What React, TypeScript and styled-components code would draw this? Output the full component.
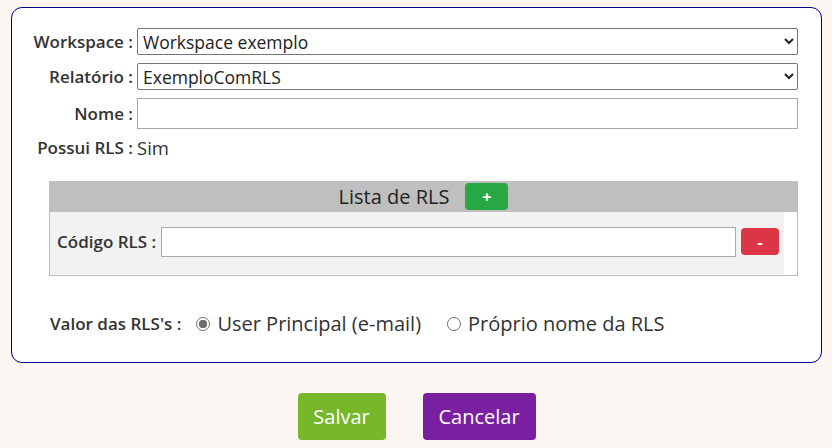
import styled, { createGlobalStyle } from "styled-components";

const GlobalStyle = createGlobalStyle`
  body {
    margin: 0;
    background: #fbf6f1;
    font-family: "Open Sans", "Noto Sans", sans-serif;
    color: #333;
  }
  * { box-sizing: border-box; }
`;

const Page = styled.div`
  padding: 7px 10px 0 11px;
  width: 832px;
  height: 448px;
`;

const Card = styled.div`
  background: #fff;
  border: 1px solid #00008b;
  border-radius: 11px;
  height: 356px;
  padding: 20px 23px 0 0;
`;

const Grid = styled.div`
  display: grid;
  grid-template-columns: 121px 1fr;
  column-gap: 4px;
  row-gap: 8px;
  align-items: center;
`;

const Label = styled.label`
  text-align: right;
  font-weight: 600;
  font-size: 17px;
  line-height: 22px;
  color: #333;
  white-space: nowrap;
`;

const Select = styled.select`
  height: 27px;
  width: 100%;
  font-family: inherit;
  font-size: 17.5px;
  color: #222;
  border: 1px solid #767676;
  border-radius: 2px;
  background: #fff;
  padding: 0 1px;
`;

const TextInput = styled.input<{ $h?: number }>`
  height: ${(p) => p.$h ?? 31}px;
  width: 100%;
  min-width: 0;
  font-family: inherit;
  font-size: 16px;
  border: 1px solid #a9a9a9;
  background: #fff;
  outline: none;
`;

const Value = styled.span`
  font-size: 18.5px;
  line-height: 22px;
  color: #333;
`;

const ListBox = styled.div`
  margin: 22px 0 0 37px;
  border: 1px solid #bdbdbd;
  border-top: none;
  background: #fff;
`;

const ListHeader = styled.div`
  background: #bfbfbf;
  height: 31px;
  display: flex;
  align-items: center;
  justify-content: center;
  gap: 16px;
  font-size: 20px;
  font-weight: 500;
  color: #222;
`;

const SmallButton = styled.button<{ $color: string; $w: number }>`
  flex-shrink: 0;
  background: ${(p) => p.$color};
  color: #fff;
  border: none;
  border-radius: 4px;
  width: ${(p) => p.$w}px;
  height: 27px;
  font-family: inherit;
  font-size: 16px;
  font-weight: 700;
  line-height: 1;
  padding: 0;
`;

const ListBody = styled.div`
  background: #f2f2f2;
  margin-right: 13px;
  height: 63px;
  display: flex;
  align-items: center;
  padding: 0 5px 4px 7px;
  gap: 5px;
`;

const RowLabel = styled.label`
  font-weight: 600;
  font-size: 17px;
  white-space: nowrap;
`;

const RadioRow = styled.div`
  display: flex;
  align-items: center;
  margin: 34px 0 0 38px;
  font-size: 20px;
  color: #333;
`;

const RadioLabel = styled.span`
  font-weight: 600;
  font-size: 17px;
  margin-right: 15px;
`;

const Option = styled.label`
  display: flex;
  align-items: center;
  gap: 7px;
  margin-right: 26px;
`;

const Radio = styled.span<{ $on?: boolean }>`
  width: 14px;
  height: 14px;
  border-radius: 50%;
  border: 1px solid #6f6f6f;
  background: ${(p) =>
    p.$on ? "radial-gradient(circle, #6f6f6f 0 4px, #fff 4.5px)" : "#fff"};
`;

const Actions = styled.div`
  display: flex;
  justify-content: center;
  gap: 37px;
  margin-top: 30px;
`;

const BigButton = styled.button<{ $color: string; $w: number }>`
  background: ${(p) => p.$color};
  color: #fff;
  border: none;
  border-radius: 4px;
  width: ${(p) => p.$w}px;
  height: 47px;
  font-family: inherit;
  font-size: 20px;
  padding: 0;
`;

export default function App() {
  return (
    <>
      <GlobalStyle />
      <Page>
        <Card>
          <Grid>
            <Label>Workspace :</Label>
            <Select defaultValue="w">
              <option value="w">Workspace exemplo</option>
            </Select>
            <Label>Relatório :</Label>
            <Select defaultValue="r">
              <option value="r">ExemploComRLS</option>
            </Select>
            <Label>Nome :</Label>
            <TextInput type="text" />
            <Label>Possui RLS :</Label>
            <Value>Sim</Value>
          </Grid>
          <ListBox>
            <ListHeader>
              Lista de RLS
              <SmallButton $color="#28a745" $w={43}>+</SmallButton>
            </ListHeader>
            <ListBody>
              <RowLabel>Código RLS :</RowLabel>
              <TextInput type="text" $h={30} />
              <SmallButton $color="#dc3545" $w={38}>-</SmallButton>
            </ListBody>
          </ListBox>
          <RadioRow>
            <RadioLabel>Valor das RLS's :</RadioLabel>
            <Option>
              <Radio $on />
              User Principal (e-mail)
            </Option>
            <Option>
              <Radio />
              Próprio nome da RLS
            </Option>
          </RadioRow>
        </Card>
        <Actions>
          <BigButton $color="#76b82a" $w={88}>Salvar</BigButton>
          <BigButton $color="#7b1fa2" $w={113}>Cancelar</BigButton>
        </Actions>
      </Page>
    </>
  );
}
